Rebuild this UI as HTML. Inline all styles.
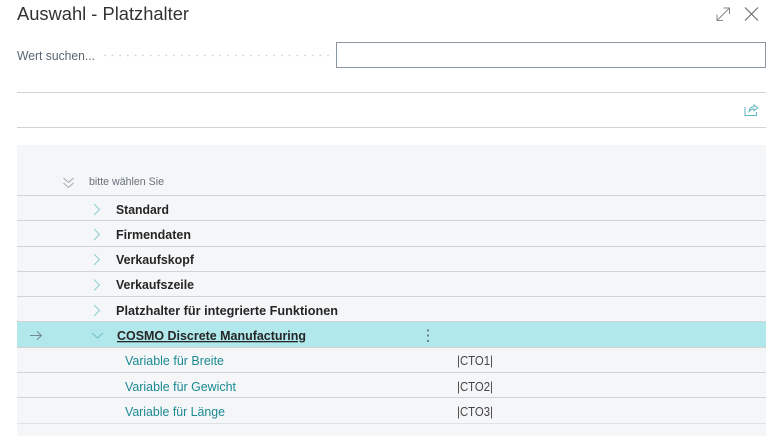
<!DOCTYPE html>
<html>
<head>
<meta charset="utf-8">
<style>
html,body{margin:0;padding:0;background:#fff;width:782px;height:436px;overflow:hidden}
svg{display:block}
text{font-family:"Liberation Sans",sans-serif}
.b{font-weight:700;font-size:13px;fill:#262626}
.l{font-size:13px;fill:#1a8a93}
.c{font-size:13px;fill:#444}
.ch{fill:none;stroke:#8fcdd2;stroke-width:1}
</style>
</head>
<body>
<svg width="782" height="436" viewBox="0 0 782 436" xmlns="http://www.w3.org/2000/svg">
<rect width="782" height="436" fill="#fff"/>
<text x="17" y="20" font-size="18.500" fill="#333" textLength="172" lengthAdjust="spacingAndGlyphs">Auswahl - Platzhalter</text>
<path d="M717 20.500L729 8.500M723.500 8H729.500V14M717 14.500V20.500H723" fill="none" stroke="#8a8a8a" stroke-width="1"/>
<path d="M745 7.500L758 20.500M758 7.500L745 20.500" fill="none" stroke="#707070" stroke-width="1.200"/>
<text x="17" y="60" font-size="13" fill="#5a6670" textLength="78" lengthAdjust="spacingAndGlyphs">Wert suchen...</text>
<line x1="104" y1="55.500" x2="330" y2="55.500" stroke="#cfcfcf" stroke-width="1.500" stroke-dasharray="1.500 6.200"/>
<rect x="336.500" y="42.500" width="429" height="25" fill="#fff" stroke="#8a96a0" stroke-width="1"/>
<rect x="17" y="92" width="749" height="1" fill="#d2d2d2"/>
<rect x="17" y="127" width="749" height="1" fill="#d2d2d2"/>
<path d="M745 107V115.500H756.500V112M749 111.500C749.500 108 751.500 106.800 754 106.800V104.800L757.800 107.900L754 110.800V108.900C752 108.900 750.500 109.800 749 111.500Z" fill="none" stroke="#5fb5bc" stroke-width="1"/>

<rect x="17" y="145" width="749" height="291" fill="#f5f6f8"/>
<rect x="17" y="321" width="749" height="26" fill="#b1e8ec"/>
<g fill="#d2d3d6">
<rect x="17" y="195" width="749" height="1"/>
<rect x="17" y="220" width="749" height="1"/>
<rect x="17" y="246" width="749" height="1"/>
<rect x="17" y="271" width="749" height="1"/>
<rect x="17" y="296" width="749" height="1"/>
<rect x="17" y="321" width="749" height="1"/>
<rect x="17" y="347" width="749" height="1"/>
<rect x="17" y="372" width="749" height="1"/>
<rect x="17" y="397" width="749" height="1"/>
<rect x="17" y="423" width="749" height="1" fill="#e0e1e4"/>
</g>

<path d="M63.500 178L68.500 182.500L73.500 178M63.500 183L68.500 187.500L73.500 183" fill="none" stroke="#a4a8ad" stroke-width="1"/>
<text x="89" y="185" font-size="11" fill="#68717b" textLength="75" lengthAdjust="spacingAndGlyphs">bitte wählen Sie</text>

<path class="ch" d="M94 204L99.500 209.500L94 215"/>
<path class="ch" d="M94 229L99.500 234.500L94 240"/>
<path class="ch" d="M94 254L99.500 259.500L94 265"/>
<path class="ch" d="M94 279.500L99.500 285L94 290.500"/>
<path class="ch" d="M94 305L99.500 310.500L94 316"/>
<path d="M92 333L97.500 338L103 333" fill="none" stroke="#6fbcc3" stroke-width="1"/>
<path d="M30 335.500H41M37 331.500L41.500 335.500L37 339.500" fill="none" stroke="#6f8a90" stroke-width="1"/>

<text class="b" x="116" y="214" textLength="53" lengthAdjust="spacingAndGlyphs">Standard</text>
<text class="b" x="116" y="239" textLength="75" lengthAdjust="spacingAndGlyphs">Firmendaten</text>
<text class="b" x="116" y="264" textLength="78" lengthAdjust="spacingAndGlyphs">Verkaufskopf</text>
<text class="b" x="116" y="289" textLength="78" lengthAdjust="spacingAndGlyphs">Verkaufszeile</text>
<text class="b" x="116" y="315" textLength="222" lengthAdjust="spacingAndGlyphs">Platzhalter für integrierte Funktionen</text>
<text class="b" x="117" y="340" textLength="189" lengthAdjust="spacingAndGlyphs" text-decoration="underline">COSMO Discrete Manufacturing</text>

<g fill="#6b8086">
<rect x="427" y="329.500" width="2" height="2"/>
<rect x="427" y="334.500" width="2" height="2"/>
<rect x="427" y="340" width="2" height="2"/>
</g>

<text class="l" x="125" y="365" textLength="99" lengthAdjust="spacingAndGlyphs">Variable für Breite</text>
<text class="l" x="125" y="391" textLength="111" lengthAdjust="spacingAndGlyphs">Variable für Gewicht</text>
<text class="l" x="125" y="416" textLength="100" lengthAdjust="spacingAndGlyphs">Variable für Länge</text>

<text class="c" x="457" y="365" textLength="36" lengthAdjust="spacingAndGlyphs">|CTO1|</text>
<text class="c" x="457" y="391" textLength="36" lengthAdjust="spacingAndGlyphs">|CTO2|</text>
<text class="c" x="457" y="416" textLength="36" lengthAdjust="spacingAndGlyphs">|CTO3|</text>
</svg>
</body>
</html>
